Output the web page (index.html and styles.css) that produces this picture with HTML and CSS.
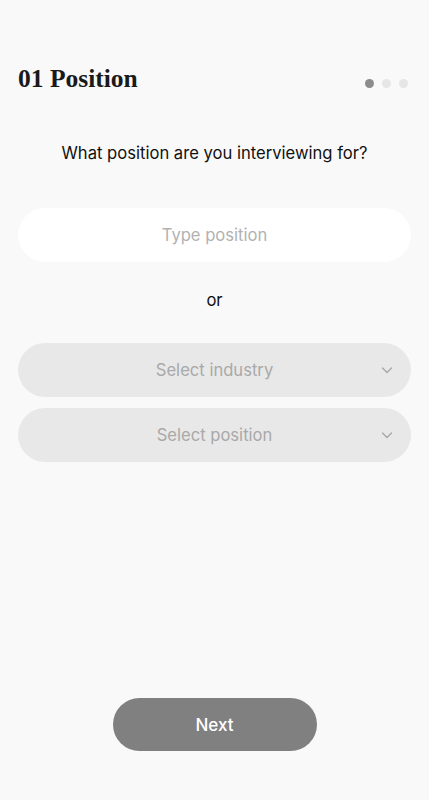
FILE: index.html
```html
<!DOCTYPE html>
<html lang="en">
<head>
  <meta charset="UTF-8">
  <meta name="viewport" content="width=device-width, initial-scale=1.0">
  <title>Position</title>
  <link rel="stylesheet" href="styles.css">
</head>
<body>
  <main class="step-page">
    <header class="step-header">
      <h1 class="step-title">01 Position</h1>
      <div class="step-dots">
        <span class="dot active"></span>
        <span class="dot"></span>
        <span class="dot"></span>
      </div>
    </header>

    <p class="question">What position are you interviewing for?</p>

    <input type="text" class="pill-input" placeholder="Type position">

    <p class="or-text">or</p>

    <div class="select-list">
      <button class="pill-select">
        <span>Select industry</span>
        <svg class="chevron" width="14" height="14" viewBox="0 0 14 14"><path d="M2.5 5l4.5 4.5L11.5 5" fill="none" stroke="#a8a8a8" stroke-width="1.4" stroke-linecap="round" stroke-linejoin="round"/></svg>
      </button>
      <button class="pill-select">
        <span>Select position</span>
        <svg class="chevron" width="14" height="14" viewBox="0 0 14 14"><path d="M2.5 5l4.5 4.5L11.5 5" fill="none" stroke="#a8a8a8" stroke-width="1.4" stroke-linecap="round" stroke-linejoin="round"/></svg>
      </button>
    </div>

    <div class="footer-actions">
      <button class="next-btn">Next</button>
    </div>
  </main>
</body>
</html>
```

FILE: styles.css
```css
/* ===== Base ===== */
:root {
  --bg: #f9f9f9;
  --field: #e8e8e8;
  --muted: #a9a9a9;
  --dark: #111111;
  --btn: #808080;
}

* {
  margin: 0;
  padding: 0;
  box-sizing: border-box;
}

body {
  background: var(--bg);
  color: var(--dark);
  font-family: 'Inter', 'Noto Sans', sans-serif;
}

.step-page {
  min-height: 800px;
  padding: 64px 18px 49px;
  display: flex;
  flex-direction: column;
}

/* ===== Header ===== */
.step-header {
  display: flex;
  justify-content: space-between;
  align-items: center;
}

.step-title {
  font-family: 'Liberation Serif', serif;
  font-weight: 700;
  font-size: 25.5px;
  line-height: 30px;
  color: #1a1a1a;
}

.step-dots {
  display: flex;
  gap: 8px;
  margin-top: 9px;
  margin-right: 3px;
}

.dot {
  width: 9px;
  height: 9px;
  border-radius: 50%;
  background: #e6e6e6;
}

.dot.active {
  background: #8c8c8c;
}

/* ===== Question ===== */
.question {
  text-align: center;
  font-size: 16.6px;
  line-height: 20px;
  margin-top: 49px;
}

.pill-input {
  margin-top: 45px;
  width: 100%;
  height: 54px;
  border: none;
  border-radius: 27px;
  background: #ffffff;
  text-align: center;
  font-family: inherit;
  font-size: 16.6px;
  outline: none;
}

.pill-input::placeholder {
  color: #b2b2b2;
}

.or-text {
  text-align: center;
  font-size: 16.6px;
  line-height: 20px;
  margin-top: 28px;
}

/* ===== Selects ===== */
.select-list {
  margin-top: 33px;
  display: flex;
  flex-direction: column;
  gap: 11px;
}

.pill-select {
  position: relative;
  width: 100%;
  height: 54px;
  border: none;
  border-radius: 27px;
  background: var(--field);
  color: var(--muted);
  font-family: inherit;
  font-size: 16.6px;
  display: flex;
  align-items: center;
  justify-content: center;
}

.chevron {
  position: absolute;
  right: 17px;
  top: 20px;
}

/* ===== Footer ===== */
.footer-actions {
  margin-top: auto;
  display: flex;
  justify-content: center;
}

.next-btn {
  width: 204px;
  height: 53px;
  border: none;
  border-radius: 27px;
  background: var(--btn);
  color: #ffffff;
  font-family: inherit;
  font-size: 17px;
  font-weight: 500;
}
```
